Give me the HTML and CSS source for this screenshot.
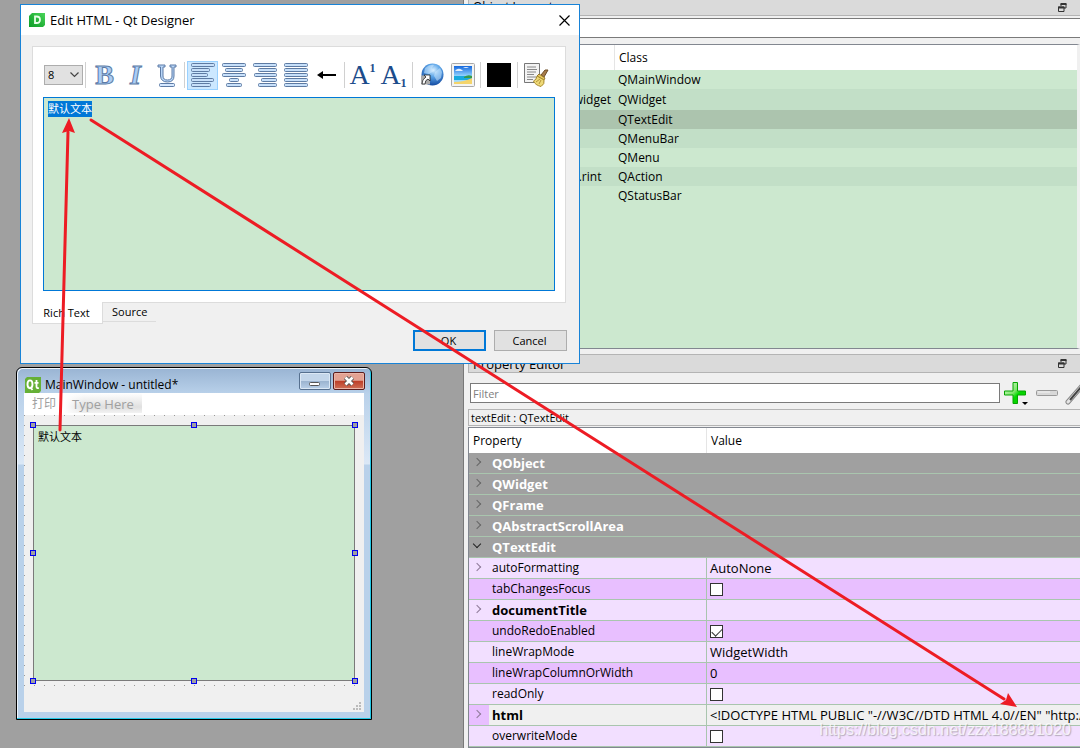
FILE: index.html
```html
<!DOCTYPE html>
<html lang="zh-CN">
<head>
<meta charset="utf-8">
<title>Qt Designer</title>
<link rel="stylesheet" href="styles.css">
</head>
<body>
<div class="designer">
  <main class="workspace"></main>
  <div class="docks">
    <section class="dock dock-objects">
      <header class="dock-title"><h2>Object Inspector</h2>
        <button class="dock-btn" aria-label="Float"><svg width="9" height="9" viewBox="0 0 9 9"><path d="M3 3V1h5v4H6" fill="none" stroke="#333" stroke-width="1"/><path d="M2.500 1h6" stroke="#333" stroke-width="2"/><path d="M.5 4h5.500v4.500H.5z" fill="#dadada" stroke="#333"/><path d="M0 4.500h6.500" stroke="#333" stroke-width="2"/></svg></button>
        <button class="dock-btn" aria-label="Close"><svg width="9" height="9" viewBox="0 0 9 9"><path d="M1 1l7 7M8 1L1 8" stroke="#555" stroke-width="2"/></svg></button>
      </header>
      <input class="object-filter" type="text" aria-label="Filter objects">
      <div class="tree">
        <table class="objects">
          <thead><tr><th class="obj-name"></th><th>Class</th></tr></thead>
          <tbody>
            <tr><td>MainWindow</td><td>QMainWindow</td></tr>
            <tr class="alt tall"><td class="child">centralwidget</td><td>QWidget</td></tr>
            <tr class="current"><td class="leaf">textEdit</td><td>QTextEdit</td></tr>
            <tr class="alt"><td>menubar</td><td>QMenuBar</td></tr>
            <tr><td>menu</td><td>QMenu</td></tr>
            <tr class="alt"><td class="action">actionP…rint</td><td>QAction</td></tr>
            <tr><td>statusbar</td><td>QStatusBar</td></tr>
          </tbody>
        </table>
      </div>
    </section>
    <section class="dock dock-props">
      <header class="dock-title"><h2>Property Editor</h2>
        <button class="dock-btn" aria-label="Float"><svg width="9" height="9" viewBox="0 0 9 9"><path d="M3 3V1h5v4H6" fill="none" stroke="#333" stroke-width="1"/><path d="M2.500 1h6" stroke="#333" stroke-width="2"/><path d="M.5 4h5.500v4.500H.5z" fill="#dadada" stroke="#333"/><path d="M0 4.500h6.500" stroke="#333" stroke-width="2"/></svg></button>
        <button class="dock-btn" aria-label="Close"><svg width="9" height="9" viewBox="0 0 9 9"><path d="M1 1l7 7M8 1L1 8" stroke="#555" stroke-width="2"/></svg></button>
      </header>
      <div class="filter-row">
        <input type="text" class="filter" placeholder="Filter" aria-label="Filter">
        <button class="tool add" aria-label="Add property"><svg width="24" height="26" viewBox="0 0 24 26"><defs><linearGradient id="gp" x1="0" y1="0" x2="1" y2="1"><stop offset="0" stop-color="#e4ffdc"/><stop offset=".45" stop-color="#7de66a"/><stop offset=".6" stop-color="#00d800"/><stop offset="1" stop-color="#19c800"/></linearGradient></defs><path d="M9 2.500h4.500v8.500h8v4h-8v8.500H9V15H.5v-4H9z" fill="url(#gp)" stroke="#05a400" stroke-linejoin="round"/><path d="M18 22h6l-3 3z" fill="#000"/></svg></button>
        <button class="tool remove" aria-label="Remove property"><svg width="22" height="6" viewBox="0 0 22 6"><rect x=".5" y=".5" width="21" height="5" rx="1" fill="#d8d8d8" stroke="#999"/><path d="M2 2h12" stroke="#f4f4f4"/></svg></button>
        <button class="tool config" aria-label="Configure"><svg width="24" height="24" viewBox="0 0 24 24"><path d="M6 21L20 5" stroke="#888" stroke-width="5" stroke-linecap="round"/><path d="M6 21L20 5" stroke="#e5e5e5" stroke-width="3" stroke-linecap="round"/><path d="M8 19L20 5" stroke="#444" stroke-width="2"/></svg></button>
      </div>
      <div class="object-label">textEdit : QTextEdit</div>
      <div class="tree">
        <table class="props">
          <thead><tr><th class="prop-name">Property</th><th>Value</th></tr></thead>
          <tbody>
            <tr class="group"><td colspan="2"><i class="arrow"></i>QObject</td></tr>
            <tr class="group"><td colspan="2"><i class="arrow"></i>QWidget</td></tr>
            <tr class="group"><td colspan="2"><i class="arrow"></i>QFrame</td></tr>
            <tr class="group"><td colspan="2"><i class="arrow"></i>QAbstractScrollArea</td></tr>
            <tr class="group"><td colspan="2"><i class="arrow open"></i>QTextEdit</td></tr>
            <tr><td><i class="arrow"></i>autoFormatting</td><td>AutoNone</td></tr>
            <tr class="deep"><td><label for="p1">tabChangesFocus</label></td><td><input type="checkbox" id="p1"></td></tr>
            <tr><td class="changed"><i class="arrow"></i>documentTitle</td><td></td></tr>
            <tr class="deep"><td><label for="p2">undoRedoEnabled</label></td><td><input type="checkbox" id="p2" checked></td></tr>
            <tr><td>lineWrapMode</td><td>WidgetWidth</td></tr>
            <tr class="deep"><td>lineWrapColumnOrWidth</td><td>0</td></tr>
            <tr><td><label for="p3">readOnly</label></td><td><input type="checkbox" id="p3"></td></tr>
            <tr class="selected"><td class="changed"><i class="arrow"></i>html</td><td>&lt;!DOCTYPE HTML PUBLIC "-//W3C//DTD HTML 4.0//EN" "http://</td></tr>
            <tr><td><label for="p4">overwriteMode</label></td><td><input type="checkbox" id="p4"></td></tr>
            <tr class="deep"><td></td><td></td></tr>
          </tbody>
        </table>
      </div>
    </section>
  </div>
</div>

<section class="form-window">
  <header class="form-title">
    <svg class="form-icon" width="16" height="16" viewBox="0 0 16 16"><path d="M2 0h14v14l-2 2H0V2z" fill="#66b036"/><ellipse cx="5" cy="7.300" rx="2.500" ry="3.900" fill="none" stroke="#fff" stroke-width="1.900"/><path d="M5.500 10.500l2 2.500M11.500 3v6.500q0 2 2.300 1.500M9.500 5.800h4" fill="none" stroke="#fff" stroke-width="1.800"/></svg>
    <h2>MainWindow - untitled*</h2>
    <button class="aero min" aria-label="Minimize"><svg width="12" height="6" viewBox="0 0 12 6"><rect x=".5" y="1.500" width="10" height="3" rx="1" fill="#fff" stroke="#555"/></svg></button>
    <button class="aero close" aria-label="Close"><svg width="12" height="10" viewBox="0 0 12 10"><path d="M2.500 1.500l7 7M9.500 1.500l-7 7" stroke="#555" stroke-width="4.500"/><path d="M2.500 1.500l7 7M9.500 1.500l-7 7" stroke="#fff" stroke-width="2.700"/></svg></button>
  </header>
  <div class="form-body">
    <nav class="menubar"><span class="menu">打印</span><span class="menu here">Type Here</span></nav>
    <div class="central">
      <div class="edit-wrap">
        <textarea aria-label="textEdit">默认文本</textarea>
        <i class="grip nw"></i><i class="grip n"></i><i class="grip ne"></i><i class="grip w"></i><i class="grip e"></i><i class="grip sw"></i><i class="grip s"></i><i class="grip se"></i>
      </div>
    </div>
    <footer class="statusbar"><svg width="8" height="8" viewBox="0 0 8 8"><path d="M6 0h2v2H6zM3 3h2v2H3zM6 3h2v2H6zM0 6h2v2H0zM3 6h2v2H3zM6 6h2v2H6z" fill="#bbb"/></svg></footer>
  </div>
</section>

<section class="dialog" role="dialog" aria-label="Edit HTML">
  <header class="dialog-title">
    <svg width="16" height="14" viewBox="0 0 16 14"><defs><linearGradient id="dg" x1="0" y1="1" x2="1" y2="0"><stop offset="0" stop-color="#0d9f28"/><stop offset=".5" stop-color="#28b53c"/><stop offset="1" stop-color="#4bd65a"/></linearGradient></defs><path d="M3 0h13v12l-2 2H0V3z" fill="url(#dg)"/><path d="M6 3.500h1.500q3.500 0 3.500 3.300T7.500 10H6z" fill="none" stroke="#e8ffe8" stroke-width="1.800"/></svg>
    <h1>Edit HTML - Qt Designer</h1>
    <button class="dialog-close" aria-label="Close"><svg width="11" height="11" viewBox="0 0 11 11"><path d="M.5.5l10 10M10.500.5l-10 10" stroke="#000" stroke-width="1.200"/></svg></button>
  </header>
  <div class="dialog-body">
    <div class="pane">
      <div class="toolbar">
        <span class="size-box"><select aria-label="Font size"><option>8</option><option>9</option><option>10</option></select><svg width="9" height="6" viewBox="0 0 9 6"><path d="M.5.5l4 4 4-4" fill="none" stroke="#444" stroke-width="1.200"/></svg></span>
        <i class="sep"></i>
        <button class="tb letter" aria-label="Bold"><b>B</b></button>
        <button class="tb letter" aria-label="Italic"><em>I</em></button>
        <button class="tb letter" aria-label="Underline"><svg width="20" height="23" viewBox="0 0 20 23"><path d="M1 1h7v2H6v9q0 4 4.500 4t4.500-4V3h-2V1h6v2h-2v9q0 6-6.500 6T3.500 12V3H1z" fill="#b8d6f8" stroke="#5c7ba6" stroke-linejoin="round"/><rect x="2.500" y="19.500" width="15" height="3" rx="1" fill="#d5e8ff" stroke="#5c7ba6"/></svg></button>
        <i class="sep"></i>
        <button class="tb checked" aria-label="Align left"><svg class="al" width="24" height="24" viewBox="0 0 24 24"><rect x=".5" y=".5" width="23" height="3" rx="1"/><rect x=".5" y="5.500" width="18" height="3" rx="1"/><rect x=".5" y="10.500" width="16" height="3" rx="1"/><rect x=".5" y="15.500" width="22" height="3" rx="1"/><rect x=".5" y="20.500" width="19" height="3" rx="1"/></svg></button>
        <button class="tb" aria-label="Align center"><svg class="al" width="24" height="24" viewBox="0 0 24 24"><rect x=".5" y=".5" width="23" height="3" rx="1"/><rect x="3.500" y="5.500" width="17" height="3" rx="1"/><rect x=".5" y="10.500" width="23" height="3" rx="1"/><rect x="7.500" y="15.500" width="9" height="3" rx="1"/><rect x="4.500" y="20.500" width="15" height="3" rx="1"/></svg></button>
        <button class="tb" aria-label="Align right"><svg class="al" width="24" height="24" viewBox="0 0 24 24"><rect x=".5" y=".5" width="23" height="3" rx="1"/><rect x="5.500" y="5.500" width="18" height="3" rx="1"/><rect x="1.500" y="10.500" width="22" height="3" rx="1"/><rect x="8.500" y="15.500" width="15" height="3" rx="1"/><rect x="5.500" y="20.500" width="18" height="3" rx="1"/></svg></button>
        <button class="tb" aria-label="Justify"><svg class="al" width="24" height="24" viewBox="0 0 24 24"><rect x=".5" y=".5" width="23" height="3" rx="1"/><rect x=".5" y="5.500" width="23" height="3" rx="1"/><rect x=".5" y="10.500" width="23" height="3" rx="1"/><rect x=".5" y="15.500" width="23" height="3" rx="1"/><rect x=".5" y="20.500" width="23" height="3" rx="1"/></svg></button>
        <button class="tb" aria-label="Right to left"><svg width="20" height="10" viewBox="0 0 20 10"><path d="M0 5l6-4v3h13v2H6v3z" fill="#000"/></svg></button>
        <i class="sep"></i>
        <button class="tb script" aria-label="Superscript">A<sup>1</sup></button>
        <button class="tb script" aria-label="Subscript">A<sub>1</sub></button>
        <i class="sep"></i>
        <button class="tb" aria-label="Insert link"><svg width="24" height="24" viewBox="0 0 24 24"><defs><radialGradient id="gl" cx=".55" cy=".3" r=".75"><stop offset="0" stop-color="#d8efff"/><stop offset=".4" stop-color="#5aa4e8"/><stop offset="1" stop-color="#0b3f97"/></radialGradient></defs><circle cx="12.500" cy="11.500" r="11" fill="url(#gl)"/><path d="M5 5q5-4 9-3l-2 3 2 3-5 3-5-1zM15 9l5-4 2 4-1 6-4 3-3-5z" fill="#d8edff" opacity=".5"/><path d="M1 12.500h9v9H1z" fill="#aaa"/><path d="M4 12h6v6l-2-2q-3 1-3 5H2q0-5 4-7z" fill="#fff" stroke="#222" stroke-width=".8"/></svg></button>
        <button class="tb" aria-label="Insert image"><svg width="24" height="24" viewBox="0 0 24 24"><defs><linearGradient id="sky" x1="0" y1="0" x2="0" y2="1"><stop offset="0" stop-color="#1568de"/><stop offset=".6" stop-color="#9fdcff"/></linearGradient></defs><rect x=".5" y=".5" width="23" height="23" rx="1" fill="#f4f4f2" stroke="#a8a8a8"/><rect x="3" y="3" width="18" height="18" fill="url(#sky)"/><path d="M3 13h18v4H3z" fill="#18a9dd"/><path d="M13 14q4-3 8-1v2h-8z" fill="#379b4a"/><path d="M3 21v-2q10 0 18-4v6z" fill="#f4d46b"/><path d="M4 8q3-4 7-1l1 1zM12 5q3-2 6 0z" fill="#fff" opacity=".85"/></svg></button>
        <i class="sep"></i>
        <button class="tb swatch" aria-label="Text color"><span></span></button>
        <i class="sep"></i>
        <button class="tb" aria-label="Simplify rich text"><svg width="25" height="24" viewBox="0 0 25 24"><path d="M.5.5h15v19H.5z" fill="#f3f3f3" stroke="#777"/><path d="M3 4h9M3 6.500h10M3 9h9M3 11.500h7M3 14h9M3 16.500h6" stroke="#888"/><path d="M24 7l-4 7-3-2 4-5z" fill="#a77c4a" stroke="#6d4c27"/><path d="M15 11l6 4-1 2-7-4z" fill="#e9c95c" stroke="#96762a"/><path d="M13 13l7 4q1 4-3 6.500Q11 22 9.500 18q3-1 3.500-5z" fill="#eed977" stroke="#a88a2f"/><path d="M12 19l4-3M15 21l2-4" stroke="#b3943a"/></svg></button>
      </div>
      <div class="rich" role="textbox" aria-label="Rich text" contenteditable="true" spellcheck="false"><mark>默认文本</mark></div>
    </div>
    <div class="tabs" role="tablist"><button class="tab active" role="tab" aria-selected="true">Rich Text</button><button class="tab" role="tab" aria-selected="false">Source</button></div>
    <div class="actions"><button class="btn default">OK</button><button class="btn">Cancel</button></div>
  </div>
</section>

<svg class="annotations" width="1080" height="748" viewBox="0 0 1080 748" aria-hidden="true">
  <g stroke="#ed1c24" stroke-width="3" stroke-linecap="round"><path d="M60 430L68 132"/><path d="M91 120L1004 699"/></g>
  <g fill="#ed1c24"><path d="M69 118l6 15-6-2-7 2z"/><path d="M1017 707l-17-3 6-4 2-7z"/></g>
</svg>
<div class="watermark">https://blog.csdn.net/zzx188891020</div>
</body>
</html>
```

FILE: styles.css
```css
* { box-sizing: border-box; }
body {
  margin: 0;
  height: 100vh;
  overflow: hidden;
  position: relative;
  background: #a0a0a0;
  color: #000;
  font: 12px/18px "Open Sans", "Noto Sans", "Noto Sans CJK SC", sans-serif;
}
h1, h2 { margin: 0; font: inherit; }
button, input, select, textarea { font: inherit; color: inherit; margin: 0; }
button { padding: 0; border: 0; background: none; display: flex; align-items: center; justify-content: center; }
svg { display: block; flex: none; }

/* main window */
.designer { display: grid; grid-template-columns: 464px minmax(0, 1fr); height: 100%; }
.workspace { border-right: 1px solid #787878; }
.docks { display: flex; flex-direction: column; min-height: 0; padding-left: 4px; background: #f0f0f0; }
.dock { display: flex; flex-direction: column; min-height: 0; overflow: hidden; }
.dock-objects { height: 349px; flex: none; }
.dock-props { flex: 1; margin-top: 5px; }
.dock-title {
  display: flex; align-items: center; gap: 13px; flex: none;
  height: 19px; padding-left: 4px;
  background: #dadada; border: 1px solid #b4b4b4; border-right: 0;
}
.dock-objects .dock-title { height: 16px; border-top: 0; }
.dock-objects .dock-title h2 { font-size: 12px; line-height: 14px; align-self: flex-start; }
.dock-title h2 { flex: 1; font-size: 13px; }
.dock-title .dock-btn:last-child { margin-right: -9px; }
.object-filter { height: 20px; margin: 2px 0 6px 2px; flex: none; background: #fff; border: 1px solid #7a7a7a; border-right: 0; }
.tree { flex: 1; min-height: 0; overflow: hidden; background: #cce8cf; border: 1px solid #828790; border-right: 0; }
.dock-objects .tree { border-right: 3px solid #f0f0f0; }
table { width: 100%; border-collapse: separate; border-spacing: 0; table-layout: fixed; }
th, td { padding: 0; text-align: left; font-weight: 400; white-space: nowrap; overflow: hidden; }
th { height: 25px; background: #fff; }
.obj-name { width: 146px; border-right: 1px solid #e5e5e5; }
.objects th + th { padding-left: 4px; }
.objects td { height: 19px; line-height: 19px; padding-left: 3px; }
.objects .tall td { height: 21px; }
.objects td.child { padding-left: 66px; }
.objects td.leaf { padding-left: 54px; }
.objects td.action { padding-left: 62px; }
.objects .alt { background: #c2dfc7; }
.objects .current { background: #acc4ae; }

.filter-row { display: flex; align-items: center; flex: none; height: 36px; padding: 4px 0 0 2px; }
.filter { flex: 1; min-width: 0; height: 20px; padding: 0 2px; background: #fff; border: 1px solid #7a7a7a; font-size: 11px; }
.filter::placeholder { color: #808080; opacity: 1; }
.tool { flex: none; width: 31px; }
.tool.config { width: 18px; justify-content: flex-start; overflow: hidden; }
.object-label { flex: none; height: 17px; line-height: 15px; padding-left: 2px; font-size: 11px; border: 1px solid #b4b4b4; border-right: 0; margin-bottom: 1px; }
.prop-name { width: 238px; border-right: 1px solid #e5e5e5; }
.props th { padding-left: 4px; }
.props td { position: relative; height: 21px; line-height: 20px; padding-left: 23px; border-bottom: 1px solid #a9c5ae; }
.props td:first-child:not([colspan]) { border-right: 1px solid #a9c5ae; }
.props td + td { padding-left: 3px; font-size: 13px; }
.props tr { background: #f2dfff; }
.props .deep { background: #e8bfff; }
.props .group { background: #a0a0a0; color: #fff; }
.props .group td, .props .changed { font-size: 13px; font-weight: 700; }
.props .selected { background: #f0f0f0; }
.props .selected .changed { background: linear-gradient(90deg, #e8bfff 20px, #f0f0f0 20px); }
.arrow { position: absolute; left: 5px; top: 6px; width: 6px; height: 6px; border: solid #666; border-width: 1px 1px 0 0; transform: rotate(45deg); }
tr:not(.group) .arrow { border-color: #8e7a99; }
.arrow.open { top: 4px; border-color: #222; transform: rotate(135deg); }
input[type=checkbox] { appearance: none; display: block; width: 13px; height: 13px; background: #fff; border: 1px solid #333; }
input[type=checkbox]:checked::before { content: ""; display: block; width: 9px; height: 5px; margin: 2px 1px; border: solid #333; border-width: 0 0 1px 1px; transform: rotate(-45deg); }

/* form being edited */
.form-window {
  position: absolute; left: 16px; top: 367px; width: 356px; height: 353px;
  padding: 1px 7px 7px;
  display: flex; flex-direction: column;
  background: linear-gradient(#99b4d3, #b9d1ea 26px, #dbe8f6 96px, #b9d1ea 97px);
  border: 1px solid #000; border-radius: 6px 6px 0 0;
  box-shadow: inset -1px -1px #23c8e6, inset 1px 1px #eef5fc;
}
.form-title { display: flex; align-items: center; height: 24px; flex: none; gap: 4px; padding-left: 1px; }
.form-title h2 { flex: 1; padding-top: 8px; }
.form-icon { margin-top: 8px; }
.aero { width: 32px; height: 18px; align-self: flex-start; margin-top: 3px; border: 1px solid #56708f; border-radius: 2px; box-shadow: inset 0 0 0 1px #dbe8f5; background: linear-gradient(#c3d6ea 48%, #9bb4d0 52%, #b9d0e8); }
.aero.min svg { margin-top: 5px; }
.aero.close { margin-right: -1px; margin-left: -2px; border-color: #5c1c1c; box-shadow: inset 0 0 0 1px #eab5a8; background: linear-gradient(#e3a293 46%, #bd3d27 50%, #cf6f57); }
.form-body { flex: 1; min-height: 0; display: flex; flex-direction: column; background: #f0f0f0; }
.menubar { display: flex; height: 22px; flex: none; gap: 8px; padding-left: 8px; background: #fff; color: #a0a0a0; line-height: 22px; }
.menu.here { padding: 0 8px; height: 20px; font-size: 13px; background: linear-gradient(90deg, #fff, transparent 20px), linear-gradient(#fff, #e0e0e0 70%, #f2f2f2); }
.central {
  flex: 1; padding: 10px 9px 13px;
  background: linear-gradient(transparent 1px, #f0f0f0 1px) 0 0 / 10px 10px, linear-gradient(90deg, #999 1px, transparent 1px) 0 0 / 10px 10px;
}
.edit-wrap { position: relative; height: 100%; }
.edit-wrap::before { content: ""; position: absolute; inset: 1px -8px 0 -8px; background: #f0f0f0; }
.edit-wrap textarea { position: relative; display: block; width: 100%; height: 100%; padding: 2px 4px; resize: none; overflow: hidden; background: #cce8cf; border: 1px solid #7a7a7a; border-radius: 0; font-size: 11px; line-height: 18px; outline: 0; }
.grip { position: absolute; width: 6px; height: 6px; background: #a0a0a0; border: 1px solid #0000f0; }
.nw, .w, .sw { left: -3px; }
.n, .s { left: calc(50% - 3px); }
.ne, .e, .se { right: -3px; }
.nw, .n, .ne { top: -3px; }
.w, .e { top: calc(50% - 3px); }
.sw, .s, .se { bottom: -3px; }
.statusbar { display: flex; justify-content: flex-end; align-items: flex-end; flex: none; height: 18px; padding: 0 3px 2px; }

/* Edit HTML dialog */
.dialog { position: absolute; left: 20px; top: 4px; width: 560px; height: 360px; display: flex; flex-direction: column; background: #f0f0f0; border: 1px solid #1883d7; }
.dialog-title { display: flex; align-items: center; gap: 5px; flex: none; height: 30px; padding: 0 9px 0 8px; background: #fff; }
.dialog-title h1 { flex: 1; font-size: 13px; }
.dialog-body { flex: 1; display: flex; flex-direction: column; padding: 11px 12px 12px 11px; font-size: 11px; }
.pane { flex: 1; display: flex; flex-direction: column; margin-right: 1px; padding: 12px 10px 11px; background: #fff; border: 1px solid #dcdcdc; }
.toolbar { display: flex; align-items: center; height: 32px; flex: none; margin-bottom: 6px; padding-left: 1px; }
.size-box { position: relative; flex: none; }
.size-box select { appearance: none; display: block; width: 39px; height: 20px; padding: 0 3px; background: #e1e1e1; border: 1px solid #adadad; border-radius: 0; }
.size-box svg { position: absolute; right: 4px; top: 7px; pointer-events: none; }
.sep { width: 1px; height: 26px; margin: 0 2px; background: #d0d0d0; }
.sep:first-of-type { margin-right: 3px; }
.tb { flex: none; width: 31px; height: 29px; }
.tb.checked { background: #cce8ff; border: 1px solid #99d1ff; }
.al rect { fill: #c7e0fa; stroke: #5e7ba3; }
.letter { font: 28px/28px "Liberation Serif", serif; color: #a9cdf7; -webkit-text-stroke: 1px #5c7ba6; }
.letter em { font-weight: 700; }
.script { font: 28px/28px "Liberation Serif", serif; color: #1c4c8b; }
.script + .sep, .swatch + .sep { margin: 0 3px; }
.script sup, .script sub { font-size: 12px; font-weight: 700; line-height: 14px; }
.script sup { align-self: flex-start; }
.script sub { align-self: flex-end; }
.swatch span { width: 24px; height: 24px; background: #000; }
.rich { flex: 1; padding: 3px 4px; background: #cce8cf; border: 1px solid #0078d7; outline: 0; line-height: 16px; }
.rich mark { display: inline-block; background: #0078d7; color: #fff; }
.tabs { display: flex; align-items: flex-start; flex: none; height: 27px; }
.tab { height: 19px; padding: 0 9px; border-bottom: 1px solid #dcdcdc; }
.tab.active { height: 22px; width: 71px; margin-top: -1px; padding: 0 2px 0 0; background: #fff; border: 1px solid #dcdcdc; border-top: 0; position: relative; }
.actions { display: flex; justify-content: flex-end; gap: 8px; flex: none; }
.btn { width: 73px; height: 21px; padding-right: 2px; background: #e1e1e1; border: 1px solid #adadad; }
.btn.default { border: 2px solid #0078d7; }

.annotations { position: absolute; left: 0; top: 0; pointer-events: none; }
.watermark { position: absolute; right: 9px; bottom: 9px; font: 16px/18px "Liberation Sans", sans-serif; color: rgba(255, 255, 255, .75); text-shadow: 1px 1px 1px rgba(120, 120, 120, .5); }
```
